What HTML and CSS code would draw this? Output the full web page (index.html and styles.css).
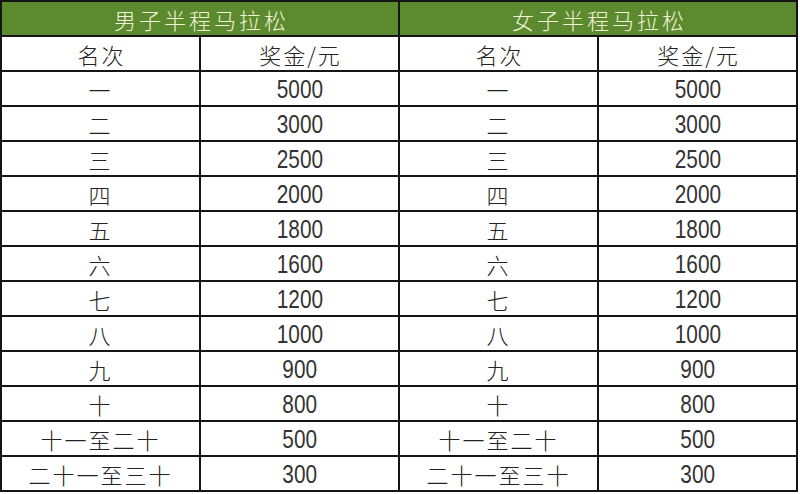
FILE: index.html
```html
<!DOCTYPE html>
<html lang="zh">
<head>
<meta charset="utf-8">
<title>半程马拉松奖金</title>
<link rel="stylesheet" href="styles.css">
</head>
<body>
<table class="prize">
  <colgroup><col><col><col><col></colgroup>
  <thead>
    <tr class="title">
      <th colspan="2">男子半程马拉松</th>
      <th colspan="2">女子半程马拉松</th>
    </tr>
    <tr class="sub">
      <th>名次</th><th>奖金/元</th><th>名次</th><th>奖金/元</th>
    </tr>
  </thead>
  <tbody>
    <tr><td class="rank">一</td><td class="num"><span>5000</span></td><td class="rank">一</td><td class="num"><span>5000</span></td></tr>
    <tr><td class="rank">二</td><td class="num"><span>3000</span></td><td class="rank">二</td><td class="num"><span>3000</span></td></tr>
    <tr><td class="rank">三</td><td class="num"><span>2500</span></td><td class="rank">三</td><td class="num"><span>2500</span></td></tr>
    <tr><td class="rank">四</td><td class="num"><span>2000</span></td><td class="rank">四</td><td class="num"><span>2000</span></td></tr>
    <tr><td class="rank">五</td><td class="num"><span>1800</span></td><td class="rank">五</td><td class="num"><span>1800</span></td></tr>
    <tr><td class="rank">六</td><td class="num"><span>1600</span></td><td class="rank">六</td><td class="num"><span>1600</span></td></tr>
    <tr><td class="rank">七</td><td class="num"><span>1200</span></td><td class="rank">七</td><td class="num"><span>1200</span></td></tr>
    <tr><td class="rank">八</td><td class="num"><span>1000</span></td><td class="rank">八</td><td class="num"><span>1000</span></td></tr>
    <tr><td class="rank">九</td><td class="num"><span>900</span></td><td class="rank">九</td><td class="num"><span>900</span></td></tr>
    <tr><td class="rank">十</td><td class="num"><span>800</span></td><td class="rank">十</td><td class="num"><span>800</span></td></tr>
    <tr><td class="rank">十一至二十</td><td class="num"><span>500</span></td><td class="rank">十一至二十</td><td class="num"><span>500</span></td></tr>
    <tr><td class="rank">二十一至三十</td><td class="num"><span>300</span></td><td class="rank">二十一至三十</td><td class="num"><span>300</span></td></tr>
  </tbody>
</table>
</body>
</html>
```
FILE: styles.css
```css
html, body {
  margin: 0;
  padding: 0;
  background: #ffffff;
}

.prize {
  width: 798px;
  table-layout: fixed;
  border-collapse: collapse;
  font-family: "Noto Sans CJK SC", "Noto Sans", sans-serif;
  color: #222222;
}

.prize col {
  width: 25%;
}

.prize th,
.prize td {
  border: 2px solid #151515;
  height: 33px;
  padding: 0;
  text-align: center;
  vertical-align: middle;
  font-weight: 300;
  line-height: 1;
  overflow: hidden;
  white-space: nowrap;
}

.title th {
  background: #5c8a2f;
  color: #f2f2d6;
  font-size: 22px;
  letter-spacing: 3px;
  padding-left: 3px;
}

.sub th {
  font-size: 22px;
  letter-spacing: 2px;
  padding-left: 2px;
}

.rank {
  font-size: 22px;
  letter-spacing: 2px;
  padding-left: 2px;
}

.num {
  font-family: "Liberation Sans", Arial, sans-serif;
  font-size: 26px;
  color: #333333;
}

.num span {
  display: inline-block;
  transform: scaleX(0.8);
}
```
